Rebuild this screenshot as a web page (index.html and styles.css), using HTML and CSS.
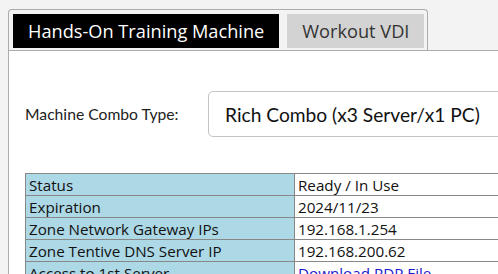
FILE: index.html
```html
<!DOCTYPE html>
<html>
<head>
<meta charset="utf-8">
<link rel="stylesheet" href="styles.css">
</head>
<body>
<div class="tabs">
  <ul class="tab-nav">
    <li class="tab tab-active">Hands-On Training Machine</li>
    <li class="tab">Workout VDI</li>
  </ul>
  <div class="panel">
    <div class="combo-row">
      <label class="combo-label">Machine Combo Type:</label>
      <div class="combo-select">Rich Combo (x3 Server/x1 PC)</div>
    </div>
    <table class="info">
      <tr><td class="key">Status</td><td class="val">Ready / In Use</td></tr>
      <tr><td class="key">Expiration</td><td class="val">2024/11/23</td></tr>
      <tr><td class="key">Zone Network Gateway IPs</td><td class="val">192.168.1.254</td></tr>
      <tr><td class="key">Zone Tentive DNS Server IP</td><td class="val">192.168.200.62</td></tr>
      <tr><td class="key">Access to 1st Server</td><td class="val"><a href="#">Download RDP File</a></td></tr>
    </table>
  </div>
</div>
</body>
</html>
```
FILE: styles.css
```css
html, body {
  margin: 0;
  padding: 0;
  overflow: hidden;
}
body {
  background: #f3f3f3;
  padding: 9px 0 0 8px;
  width: 490px;
  height: 265px;
}
.tabs {
  display: flex;
  flex-direction: column;
  height: 100%;
}
.tab-nav {
  list-style: none;
  margin: 0;
  padding: 4px 4px 2px 4px;
  width: 410px;
  border: 1px solid #ababab;
  border-bottom: none;
  border-radius: 4px 4px 0 0;
  display: flex;
  gap: 8px;
}
.tab {
  height: 34px;
  display: flex;
  align-items: center;
  padding: 0 15px;
  font-family: "Open Sans", sans-serif;
  font-size: 18.2px;
  white-space: nowrap;
  background: #d3d3d3;
  color: #333;
}
.tab-active {
  background: #000;
  color: #fff;
}
.panel {
  flex: 1;
  background: #fff;
  border-top: 1px solid #ababab;
  border-left: 1px solid #ababab;
  padding: 40px 0 0 16px;
}
.combo-row {
  display: flex;
  align-items: center;
}
.combo-label {
  flex: none;
  width: 183px;
  white-space: nowrap;
  font-family: Lato, sans-serif;
  font-size: 15.7px;
  color: #222;
}
.combo-select {
  flex: none;
  width: 400px;
  height: 44px;
  border: 1px solid #c4c4c4;
  border-radius: 5px;
  padding-left: 16px;
  display: flex;
  align-items: center;
  white-space: nowrap;
  font-family: Lato, sans-serif;
  font-size: 19.2px;
  color: #111;
}
.info {
  margin-top: 36px;
  border-collapse: collapse;
  width: 600px;
  font-family: "Open Sans", sans-serif;
  font-size: 15.2px;
  color: #111;
}
.info td {
  border: 1px solid #888;
  height: 21px;
  padding: 0 3px;
  line-height: 20px;
  white-space: nowrap;
}
.key {
  width: 262px;
  background: #add8e6;
}
.val {
  background: #fff;
}
.val a {
  color: #1a1acc;
}
```
